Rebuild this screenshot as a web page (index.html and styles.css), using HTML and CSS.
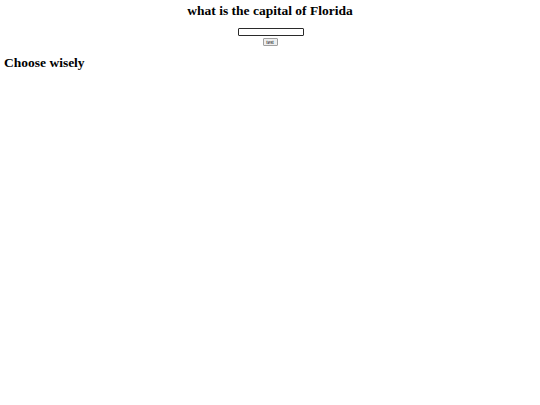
FILE: index.html
```html
<!DOCTYPE html>
<html>
<head>
<meta charset="utf-8">
<link rel="stylesheet" href="styles.css">
</head>
<body>
<h2 class="question">what is the capital of Florida</h2>
<form class="answer-form">
  <input class="answer-input" type="text">
  <button class="answer-button" type="button">test</button>
</form>
<h2 class="verdict">Choose wisely</h2>
</body>
</html>
```
FILE: styles.css
```css
html, body {
  background: #ffffff;
}
body {
  margin: 3px 4px;
  font-family: "Liberation Serif", "Times New Roman", serif;
  color: #000000;
}
.question {
  margin: 0;
  font-size: 13.5px;
  font-weight: bold;
  text-align: center;
  line-height: 15px;
}
.answer-form {
  margin-top: 10px;
  display: flex;
  flex-direction: column;
  align-items: center;
}
.answer-input {
  box-sizing: border-box;
  width: 66px;
  height: 8px;
  margin: 0 0 0 1px;
  padding: 0;
  border: 1px solid #2a2a2a;
  border-radius: 1px;
  background: #ffffff;
}
.answer-button {
  box-sizing: border-box;
  width: 15px;
  height: 8px;
  margin: 2px 0 0 0;
  padding: 0;
  font-family: "Liberation Serif", "Times New Roman", serif;
  font-size: 5.5px;
  line-height: 6px;
  color: #000000;
  background: #efefef;
  border: 1px solid #a0a0a0;
  border-radius: 1px;
}
.verdict {
  margin: 9px 0 0 0;
  font-size: 13.5px;
  font-weight: bold;
  line-height: 15px;
}
```
